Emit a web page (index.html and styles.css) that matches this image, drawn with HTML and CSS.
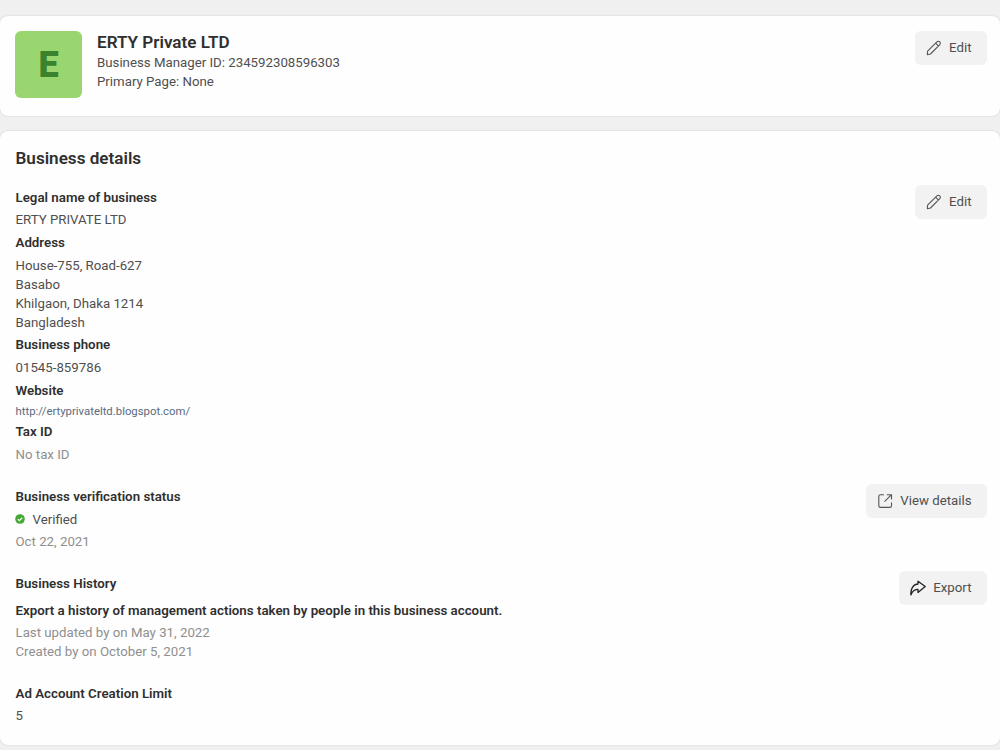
FILE: index.html
```html
<!DOCTYPE html>
<html lang="en">
<head>
  <meta charset="UTF-8">
  <meta name="viewport" content="width=device-width, initial-scale=1.0">
  <title>Business info</title>
  <link rel="stylesheet" href="styles.css">
</head>
<body>
  <header class="card profile">
    <div class="avatar">E</div>
    <div class="profile-text">
      <h1>ERTY Private LTD</h1>
      <p>Business Manager ID: 234592308596303</p>
      <p>Primary Page: None</p>
    </div>
    <button class="btn">
      <svg class="icon" viewBox="0 0 16 16"><path d="M1.3 14.7l.3-3.5L10.9 1.9c.9-.9 2.1-.9 2.9-.1.8.9.8 2 0 2.900L4.500 14zM9.6 3.2l2.9 2.9"/></svg>
      <span>Edit</span>
    </button>
  </header>

  <main class="card details">
    <h2>Business details</h2>

    <section class="row">
      <div class="info">
        <h3>Legal name of business</h3>
        <p>ERTY PRIVATE LTD</p>
        <h3>Address</h3>
        <p>House-755, Road-627<br>Basabo<br>Khilgaon, Dhaka 1214<br>Bangladesh</p>
        <h3>Business phone</h3>
        <p>01545-859786</p>
        <h3>Website</h3>
        <a class="link" href="#">http://ertyprivateltd.blogspot.com/</a>
        <h3>Tax ID</h3>
        <p class="muted">No tax ID</p>
      </div>
      <button class="btn">
        <svg class="icon" viewBox="0 0 16 16"><path d="M1.3 14.7l.3-3.5L10.9 1.9c.9-.9 2.1-.9 2.9-.1.8.9.8 2 0 2.900L4.500 14zM9.6 3.2l2.9 2.9"/></svg>
        <span>Edit</span>
      </button>
    </section>

    <section class="row">
      <div class="info">
        <h3>Business verification status</h3>
        <p class="status">
          <svg class="check" viewBox="0 0 10 10"><circle cx="5" cy="5" r="4.8"/><path d="M2.8 5.1l1.6 1.6 2.9-3"/></svg>
          <span>Verified</span>
        </p>
        <p class="muted">Oct 22, 2021</p>
      </div>
      <button class="btn">
        <svg class="icon" viewBox="0 0 16 16"><path d="M7 1.7H3.5Q1.8 1.7 1.8 3.4V12.7Q1.8 14.4 3.5 14.4H12.8Q14.5 14.4 14.5 12.7V9.5M9.8 1.7H14.5V6.4M14.3 1.9L7.5 8.7"/></svg>
        <span>View details</span>
      </button>
    </section>

    <section class="row">
      <div class="info">
        <h3>Business History</h3>
        <h3 class="export-note">Export a history of management actions taken by people in this business account.</h3>
        <p class="muted">Last updated by on May 31, 2022<br>Created by on October 5, 2021</p>
      </div>
      <button class="btn">
        <svg class="icon dark" viewBox="0 0 16 16"><path d="M8 1.2L15.2 6.6L8 12.4V9.4C4.5 9.4 2.3 11.3.9 14.9C.5 9 3 4.3 8 4z"/></svg>
        <span>Export</span>
      </button>
    </section>

    <section class="row">
      <div class="info">
        <h3>Ad Account Creation Limit</h3>
        <p>5</p>
      </div>
    </section>
  </main>
</body>
</html>
```

FILE: styles.css
```css
* {
  box-sizing: border-box;
}
body {
  margin: 0;
  padding-top: 16px;
  height: 750px;
  overflow: hidden;
  background: #f0f0f0;
  font-family: Roboto, "Liberation Sans", sans-serif;
  font-size: 13.25px;
  line-height: 19px;
  color: #4f4f4f;
}
h1, h2, h3, p {
  margin: 0;
}
h1, h2, h3 {
  font-weight: 600;
  color: #2f2f2f;
}
.card {
  background: #fefefe;
  border-radius: 8px;
  box-shadow: 0 0 2px rgba(0, 0, 0, 0.16);
}
.profile {
  display: flex;
  align-items: flex-start;
  height: 100px;
  padding: 15px 13px 0 15px;
  margin-bottom: 15px;
}
.avatar {
  display: flex;
  align-items: center;
  justify-content: center;
  width: 67px;
  height: 67px;
  padding-top: 1px;
  margin-right: 15px;
  border-radius: 6px;
  background: #99d66f;
  color: #3a822b;
  font-size: 36px;
  font-weight: 900;
}
.profile-text {
  flex: 1;
}
h1 {
  font-size: 17.1px;
  line-height: 22px;
}
h2 {
  font-size: 17.1px;
  line-height: 22px;
  margin-bottom: 18.7px;
}
h3 {
  font-size: 13.3px;
  line-height: 19px;
}
.details {
  display: flex;
  flex-direction: column;
  height: 614px;
  padding: 16px 13px 0 15.5px;
}
.row {
  display: flex;
  align-items: flex-start;
  justify-content: space-between;
  margin-bottom: 22.8px;
}
.info {
  display: flex;
  flex-direction: column;
  gap: 3.7px;
}
.link {
  font-size: 11.35px;
  line-height: 15.3px;
  color: #5a6b80;
  text-decoration: none;
}
.muted {
  color: #8f8f8f;
}
.status {
  display: flex;
  align-items: center;
  gap: 7.5px;
}
.check {
  width: 10px;
  height: 10px;
  margin-left: -0.5px;
  fill: #45a735;
}
.check path {
  fill: none;
  stroke: #fff;
  stroke-width: 1.2;
}
.export-note {
  margin: 3.7px 0 -0.5px;
}
.btn {
  display: flex;
  align-items: center;
  gap: 7.5px;
  height: 34px;
  margin-top: -3px;
  padding: 0 15.5px 1px 11px;
  border: 0;
  border-radius: 6px;
  background: #f2f2f2;
  color: #4f4f4f;
  font: inherit;
}
.profile .btn {
  margin-top: 0;
}
.icon {
  width: 16px;
  height: 16px;
  margin-top: 1px;
  fill: none;
  stroke: #555;
  stroke-width: 1.1;
  stroke-linejoin: round;
}
.dark {
  stroke: #222;
  stroke-width: 1.3;
}
```
